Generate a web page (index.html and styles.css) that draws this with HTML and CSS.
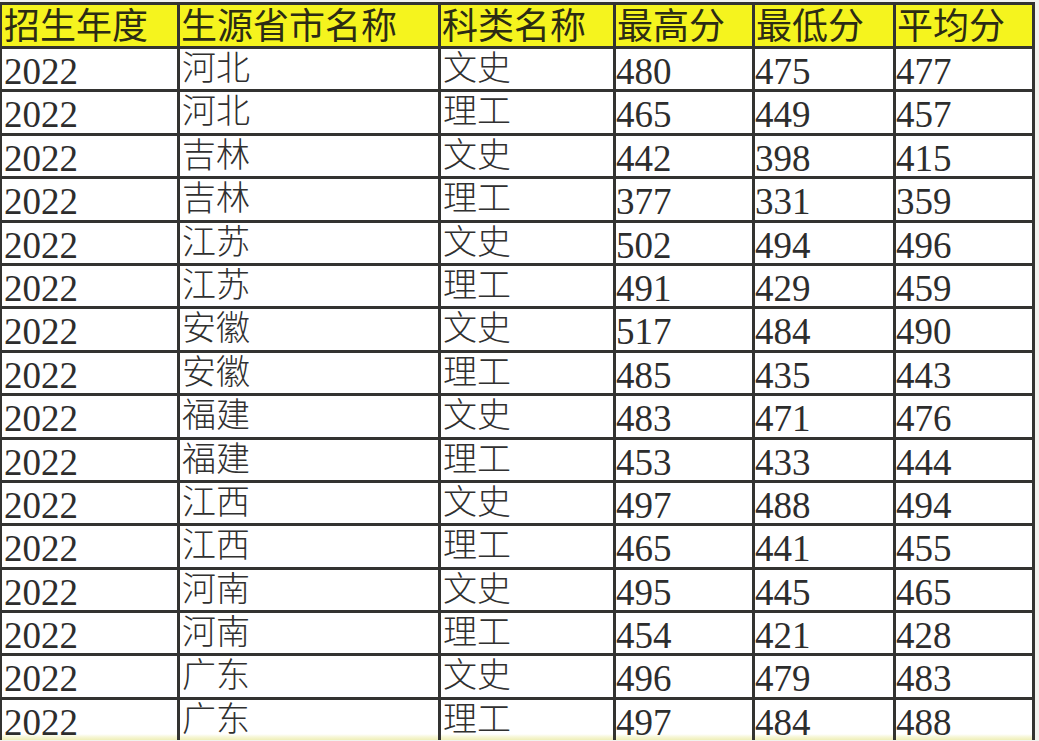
FILE: index.html
```html
<!DOCTYPE html>
<html lang="zh">
<head>
<meta charset="utf-8">
<title>分数线</title>
<link rel="stylesheet" href="styles.css">
</head>
<body>
<div class="page">
  <div class="sheet">
    <div class="h">招生年度</div><div class="h">生源省市名称</div><div class="h">科类名称</div><div class="h">最高分</div><div class="h">最低分</div><div class="h">平均分</div>

    <div class="n">2022</div><div class="c">河北</div><div class="c">文史</div><div class="n">480</div><div class="n">475</div><div class="n">477</div>
    <div class="n">2022</div><div class="c">河北</div><div class="c">理工</div><div class="n">465</div><div class="n">449</div><div class="n">457</div>
    <div class="n">2022</div><div class="c">吉林</div><div class="c">文史</div><div class="n">442</div><div class="n">398</div><div class="n">415</div>
    <div class="n">2022</div><div class="c">吉林</div><div class="c">理工</div><div class="n">377</div><div class="n">331</div><div class="n">359</div>
    <div class="n">2022</div><div class="c">江苏</div><div class="c">文史</div><div class="n">502</div><div class="n">494</div><div class="n">496</div>
    <div class="n">2022</div><div class="c">江苏</div><div class="c">理工</div><div class="n">491</div><div class="n">429</div><div class="n">459</div>
    <div class="n">2022</div><div class="c">安徽</div><div class="c">文史</div><div class="n">517</div><div class="n">484</div><div class="n">490</div>
    <div class="n">2022</div><div class="c">安徽</div><div class="c">理工</div><div class="n">485</div><div class="n">435</div><div class="n">443</div>
    <div class="n">2022</div><div class="c">福建</div><div class="c">文史</div><div class="n">483</div><div class="n">471</div><div class="n">476</div>
    <div class="n">2022</div><div class="c">福建</div><div class="c">理工</div><div class="n">453</div><div class="n">433</div><div class="n">444</div>
    <div class="n">2022</div><div class="c">江西</div><div class="c">文史</div><div class="n">497</div><div class="n">488</div><div class="n">494</div>
    <div class="n">2022</div><div class="c">江西</div><div class="c">理工</div><div class="n">465</div><div class="n">441</div><div class="n">455</div>
    <div class="n">2022</div><div class="c">河南</div><div class="c">文史</div><div class="n">495</div><div class="n">445</div><div class="n">465</div>
    <div class="n">2022</div><div class="c">河南</div><div class="c">理工</div><div class="n">454</div><div class="n">421</div><div class="n">428</div>
    <div class="n">2022</div><div class="c">广东</div><div class="c">文史</div><div class="n">496</div><div class="n">479</div><div class="n">483</div>
    <div class="n last">2022</div><div class="c last">广东</div><div class="c last">理工</div><div class="n last">497</div><div class="n last">484</div><div class="n last">488</div>
  </div>
</div>
</body>
</html>
```

FILE: styles.css
```css
html, body {
  margin: 0;
  padding: 0;
  background: #f7f7f5;
}

.page {
  width: 1039px;
  height: 741px;
  overflow: hidden;
  padding-top: 2px;
  box-sizing: border-box;
  background: #f2f2ee;
}

.sheet {
  width: 1035px;
  box-sizing: border-box;
  display: grid;
  grid-template-columns: 175px 258px 172px 136px 138px 136px;
  grid-template-rows: 41px repeat(16, 40.4px);
  gap: 3px;
  padding: 3px 3px 0 2px;
  background: #333331;
}

.h {
  background: #f5f41e;
  color: #2c2c14;
  font-family: "Noto Sans CJK SC", sans-serif;
  font-weight: 400;
  font-size: 36px;
  line-height: 36px;
  padding-left: 1px;
  white-space: nowrap;
}

.n {
  background: #ffffff;
  color: #2d2d2d;
  font-family: "Liberation Serif", "Times New Roman", serif;
  font-size: 37px;
  line-height: 40px;
  padding-top: 3px;
  box-sizing: border-box;
}

.c {
  background: #ffffff;
  color: #303030;
  font-family: "Noto Sans CJK SC", sans-serif;
  font-weight: 300;
  font-size: 34px;
  line-height: 34px;
  padding-left: 2px;
}

.sheet > :nth-child(6n+1) {
  padding-left: 2px;
}

.last {
  background: linear-gradient(to bottom, #ffffff 0, #ffffff 34px, #f6f6d6 37px, #eeeeb4 40.4px);
}
```
